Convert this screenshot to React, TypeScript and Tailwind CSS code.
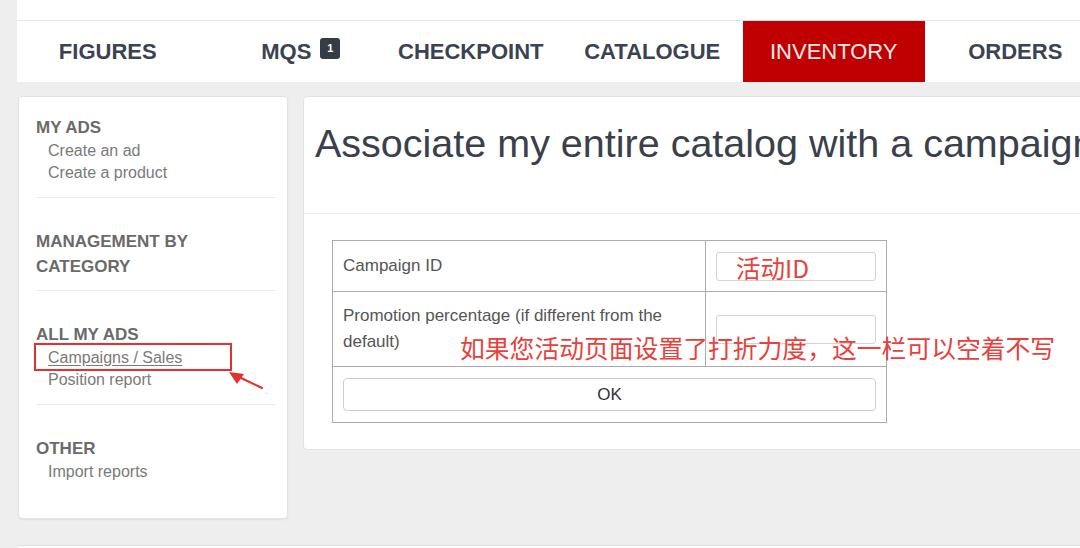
import React from 'react';

const tabs = ['FIGURES', 'MQS', 'CHECKPOINT', 'CATALOGUE', 'INVENTORY', 'ORDERS'];

type Section = { title: string[]; items: string[]; pb: string };

const sections: Section[] = [
  { title: ['MY ADS'], items: ['Create an ad', 'Create a product'], pb: 'pb-[13px]' },
  { title: ['MANAGEMENT BY', 'CATEGORY'], items: [], pb: 'pb-[11px]' },
  { title: ['ALL MY ADS'], items: ['Campaigns / Sales', 'Position report'], pb: 'pb-[13px]' },
  { title: ['OTHER'], items: ['Import reports'], pb: '' },
];

function NavBar() {
  return (
    <div className="ml-[17px] bg-white">
      <div className="h-[21px] border-b border-[#e6e6e6]" />
      <nav className="flex h-[61px]">
        {tabs.map((tab) => {
          const active = tab === 'INVENTORY';
          return (
            <div
              key={tab}
              className={
                active
                  ? 'flex w-[181.5px] shrink-0 items-center justify-center bg-[#c00000] text-[22px] font-normal text-[#fbeaea]'
                  : 'flex w-[181.5px] shrink-0 items-center justify-center text-[22px] font-bold text-[#3b4350]'
              }
            >
              <span className={tab === 'MQS' ? 'relative -left-[3px]' : 'relative'}>
                {tab}
                {tab === 'MQS' && (
                  <span className="absolute -right-[29px] top-[3px] flex h-[21px] w-[20px] items-center justify-center rounded-[3px] bg-[#353c46] text-[11px] font-bold leading-none text-white">
                    1
                  </span>
                )}
              </span>
            </div>
          );
        })}
      </nav>
    </div>
  );
}

function Sidebar() {
  return (
    <aside className="relative h-[423px] w-[270px] shrink-0 rounded-[4px] border border-[#e2e2e2] bg-white pl-[17px] pr-[11px] pt-[18px] shadow-[0_1px_2px_rgba(0,0,0,0.06)]">
      {sections.map((s, i) => (
        <div
          key={s.title.join(' ')}
          className={`${s.pb} ${i > 0 ? 'pt-[31px]' : ''} ${i < sections.length - 1 ? 'border-b border-[#ececec]' : ''}`}
        >
          {s.title.map((t) => (
            <div key={t} className="text-[17px] font-bold leading-[25px] text-[#6a6a6a]">
              {t}
            </div>
          ))}
          {s.items.map((item) => (
            <div
              key={item}
              className={
                item === 'Campaigns / Sales'
                  ? 'pl-[12px] text-[16px] leading-[22px] text-[#7a7a7a] underline underline-offset-2'
                  : 'pl-[12px] text-[16px] leading-[22px] text-[#7a7a7a]'
              }
            >
              {item}
            </div>
          ))}
        </div>
      ))}

      {/* annotation box + arrow */}
      <div className="absolute left-[15px] top-[246px] h-[28px] w-[198px] border-[2.5px] border-[#e4312f]" />
      <svg className="absolute left-[200px] top-[265px]" width="50" height="30" viewBox="0 0 50 30">
        <line x1="43" y1="26" x2="20" y2="15" stroke="#e4312f" strokeWidth="2" strokeLinecap="round" />
        <polygon points="10,10 25,12 18,22" fill="#e4312f" />
      </svg>
    </aside>
  );
}

function MainCard() {
  return (
    <section className="h-[354px] w-[800px] shrink-0 rounded-[4px] border border-[#e2e2e2] bg-white">
      <div className="h-[117px] border-b border-[#eeeeee] pl-[11px] pt-[24px]">
        <h1 className="whitespace-nowrap text-[39.5px] font-normal leading-[44px] text-[#3a404b]">
          Associate my entire catalog with a campaign
        </h1>
      </div>
      <div className="relative ml-[28px] mt-[26px] w-[555px]">
        <table className="w-[555px] border-collapse text-[17px] text-[#555]">
          <tbody>
            <tr className="h-[51px]">
              <td className="w-[373px] border border-[#ababab] px-[10px]">Campaign ID</td>
              <td className="border border-[#ababab] px-[10px]">
                <div className="h-[29px] w-[160px] rounded-[3px] border border-[#d4d4d4]" />
              </td>
            </tr>
            <tr className="h-[75px]">
              <td className="border border-[#ababab] px-[10px] leading-[26px]">
                Promotion percentage (if different from the default)
              </td>
              <td className="border border-[#ababab] px-[10px]">
                <div className="h-[29px] w-[160px] rounded-[3px] border border-[#d4d4d4]" />
              </td>
            </tr>
            <tr className="h-[56px]">
              <td colSpan={2} className="border border-[#ababab] px-[10px]">
                <button
                  type="button"
                  className="h-[33px] w-full rounded-[4px] border border-[#cfcfcf] bg-white text-[17px] text-[#333]"
                >
                  OK
                </button>
              </td>
            </tr>
          </tbody>
        </table>

        {/* red annotations */}
        <span className="absolute left-[404px] top-[13px] whitespace-nowrap font-['Noto_Sans_CJK_SC',sans-serif] text-[24.5px] leading-[30px] text-[#e8403b]">
          活动ID
        </span>
        <span className="absolute left-[128px] top-[92px] whitespace-nowrap font-['Noto_Sans_CJK_SC',sans-serif] text-[24.8px] leading-[30px] text-[#e8403b]">
          如果您活动页面设置了打折力度，这一栏可以空着不写
        </span>
      </div>
    </section>
  );
}

export default function App() {
  return (
    <div className="h-[548px] w-[1080px] overflow-hidden bg-[#eeeeee] font-['Liberation_Sans',Arial,sans-serif]">
      <NavBar />
      <div className="ml-[18px] mt-[14px] flex gap-[15px]">
        <Sidebar />
        <MainCard />
      </div>
      <div className="ml-[18px] mt-[26px] h-[20px] border-t border-[#e0e0e0] bg-white" />
    </div>
  );
}
